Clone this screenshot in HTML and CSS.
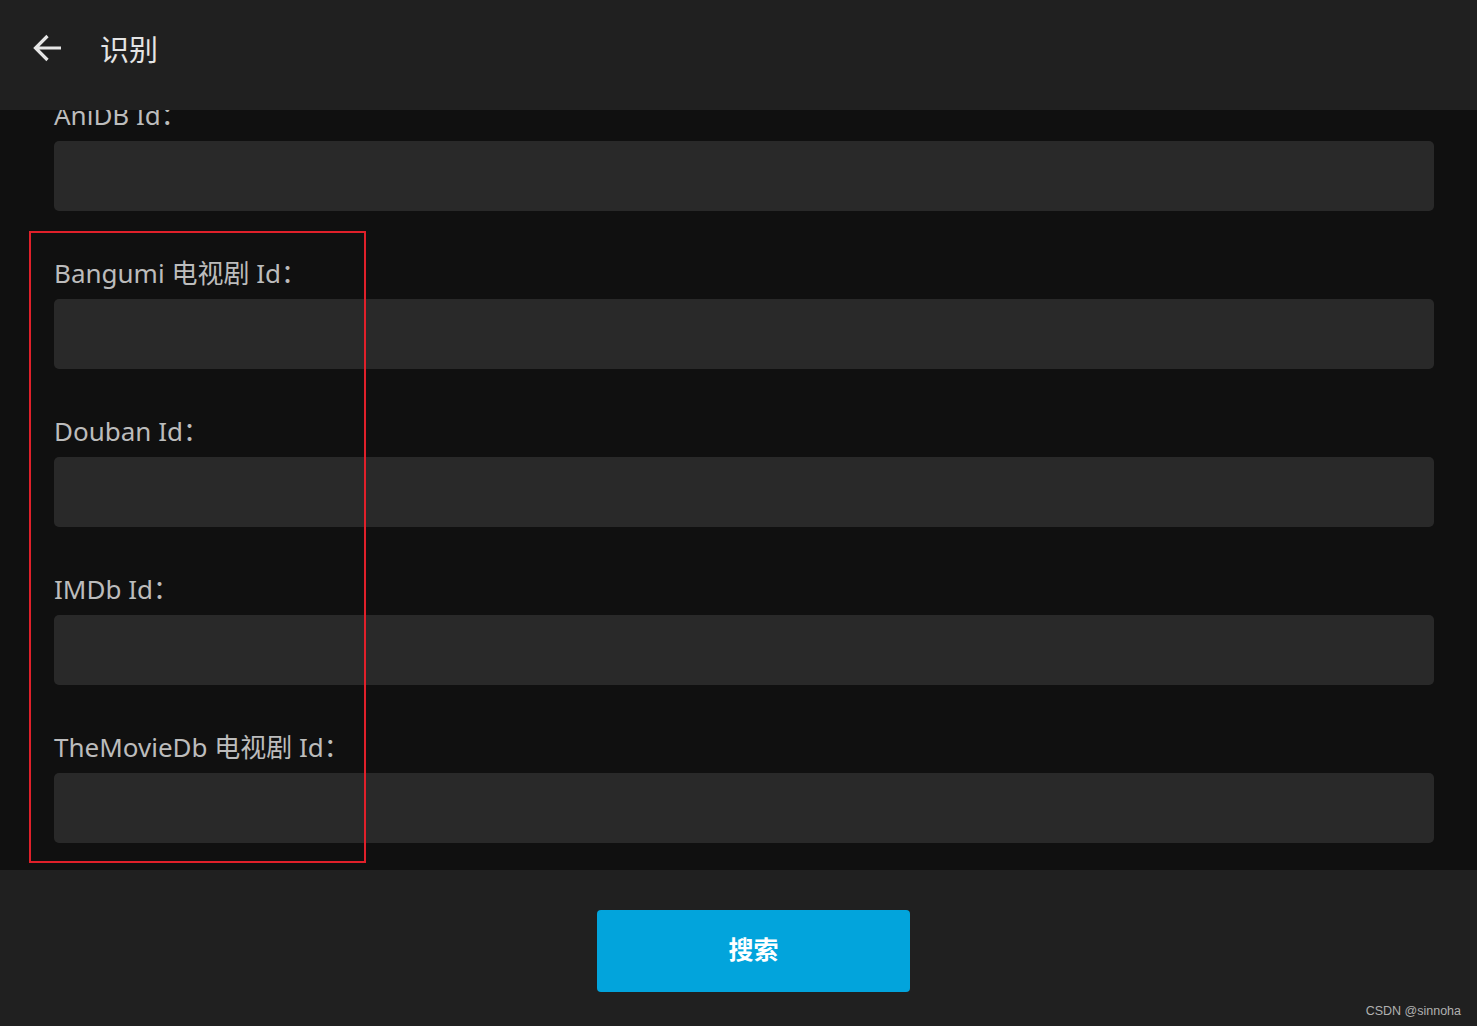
FILE: index.html
```html
<!DOCTYPE html>
<html lang="zh">
<head>
<meta charset="utf-8">
<title>识别</title>
<link rel="stylesheet" href="styles.css">
</head>
<body>
<div class="page">
  <header class="topbar">
    <button class="back" aria-label="返回">
      <svg width="30" height="30" viewBox="0 0 30 30"><path d="M29 15H3.5M15.5 3L3.5 15L15.5 27" fill="none" stroke="#e6e6e6" stroke-width="3.2"/></svg>
    </button>
    <h1 class="title">识别</h1>
  </header>
  <main class="content">
    <div class="fields">
      <div class="field">
        <label class="label">AniDB Id：</label>
        <div class="input"></div>
      </div>
      <div class="field">
        <label class="label">Bangumi 电视剧 Id：</label>
        <div class="input"></div>
      </div>
      <div class="field">
        <label class="label">Douban Id：</label>
        <div class="input"></div>
      </div>
      <div class="field">
        <label class="label">IMDb Id：</label>
        <div class="input"></div>
      </div>
      <div class="field">
        <label class="label">TheMovieDb 电视剧 Id：</label>
        <div class="input"></div>
      </div>
    </div>
    <div class="highlight"></div>
  </main>
  <footer class="footer">
    <button class="search">搜索</button>
    <span class="watermark">CSDN @sinnoha</span>
  </footer>
</div>
</body>
</html>
```

FILE: styles.css
```css
html, body {
  margin: 0;
  padding: 0;
  background: #101010;
}
.page {
  width: 1477px;
  height: 1026px;
  display: flex;
  flex-direction: column;
  font-family: "Noto Sans", "Noto Sans CJK SC", sans-serif;
  overflow: hidden;
}
.topbar {
  height: 110px;
  flex: none;
  background: #202020;
  display: flex;
  align-items: center;
  padding-left: 32px;
  position: relative;
  z-index: 2;
  box-sizing: border-box;
  padding-bottom: 14px;
}
.back {
  background: none;
  border: 0;
  padding: 0;
  width: 30px;
  height: 30px;
  display: flex;
  cursor: pointer;
}
.title {
  margin: 0 0 0 38px;
  font-size: 29px;
  font-weight: 400;
  color: #e4e4e4;
  font-family: "Noto Sans CJK SC", sans-serif;
  line-height: 1;
}
.content {
  flex: 1;
  position: relative;
  overflow: hidden;
  background: #101010;
}
.fields {
  display: flex;
  flex-direction: column;
  gap: 44px;
  padding: 0 43px 0 54px;
  margin-top: -13px;
}
.field {
  display: flex;
  flex-direction: column;
}
.label {
  font-size: 26px;
  line-height: 36px;
  color: #bcbcbc;
  margin-bottom: 8px;
}
.input {
  height: 70px;
  background: #292929;
  border-radius: 5px;
}
.highlight {
  position: absolute;
  left: 29px;
  top: 121px;
  width: 333px;
  height: 628px;
  border: 2px solid #e0202a;
}
.footer {
  height: 156px;
  flex: none;
  background: #202020;
  display: flex;
  justify-content: center;
  align-items: flex-start;
  padding-top: 40px;
  padding-left: 30px;
  box-sizing: border-box;
  position: relative;
}
.search {
  width: 313px;
  height: 82px;
  background: #02a4dc;
  border: 0;
  border-radius: 4px;
  color: #ffffff;
  font-family: "Noto Sans CJK SC", sans-serif;
  font-weight: 700;
  font-size: 25px;
  line-height: 1;
  padding: 0 0 5px;
}
.watermark {
  position: absolute;
  right: 16px;
  bottom: 8px;
  font-family: "Liberation Sans", Arial, sans-serif;
  font-size: 12.5px;
  color: #b0b0b0;
}
```
